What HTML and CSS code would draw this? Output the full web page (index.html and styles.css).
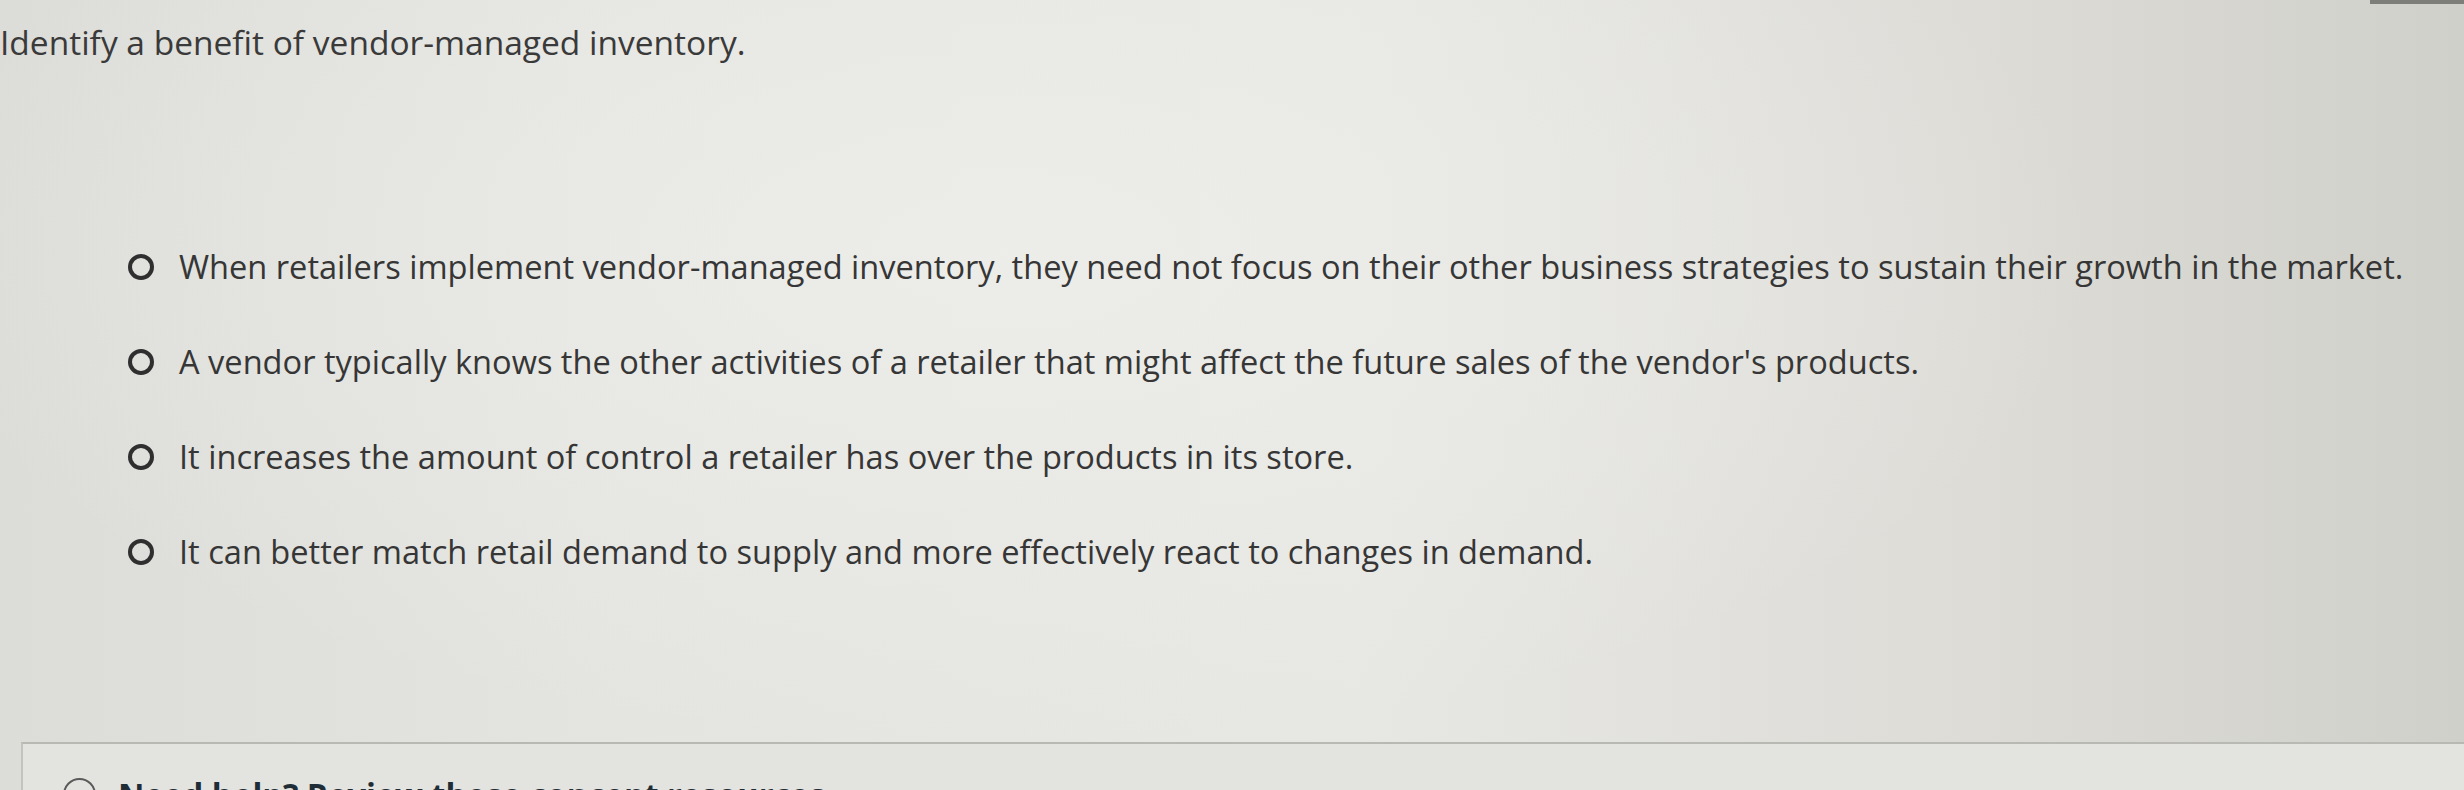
FILE: index.html
```html
<!DOCTYPE html>
<html lang="en">
<head>
<meta charset="utf-8">
<title>Vendor-managed inventory question</title>
<link rel="stylesheet" href="styles.css">
</head>
<body>
<main class="page">
  <div class="screen-edge"></div>
  <h1 class="prompt">Identify a benefit of vendor-managed inventory.</h1>
  <ul class="options">
    <li class="option"><span class="radio"></span><span class="label">When retailers implement vendor-managed inventory, they need not focus on their other business strategies to sustain their growth in the market.</span></li>
    <li class="option"><span class="radio"></span><span class="label">A vendor typically knows the other activities of a retailer that might affect the future sales of the vendor's products.</span></li>
    <li class="option"><span class="radio"></span><span class="label">It increases the amount of control a retailer has over the products in its store.</span></li>
    <li class="option"><span class="radio"></span><span class="label">It can better match retail demand to supply and more effectively react to changes in demand.</span></li>
  </ul>
  <section class="help">
    <span class="help-icon"></span>
    <span class="help-text">Need help? Review these concept resources.</span>
  </section>
</main>
</body>
</html>
```
FILE: styles.css
```css
html, body {
  margin: 0;
  padding: 0;
  height: 100%;
  overflow: hidden;
}
body {
  background:
    radial-gradient(ellipse 1100px 500px at 1000px 250px, rgba(238,238,235,0.8), rgba(238,238,235,0) 100%),
    linear-gradient(90deg, #dcdcd8 0%, #e4e4e0 25%, #e7e7e4 55%, #dddcd7 80%, #d0d0ca 100%);
  font-family: "Open Sans", "Liberation Sans", sans-serif;
  color: #3a3a3a;
}
.page {
  position: relative;
  height: 790px;
  overflow: hidden;
}
.screen-edge {
  position: absolute;
  top: 0;
  right: 0;
  width: 94px;
  height: 4px;
  background: #7d7d7a;
}
.prompt {
  margin: 21px 0 0 0;
  font-size: 33.5px;
  line-height: 42px;
  font-weight: 400;
  color: #3a3a3a;
}
.options {
  list-style: none;
  margin: 184px 0 0 0;
  padding: 0 0 0 128px;
  display: flex;
  flex-direction: column;
  gap: 55px;
}
.option {
  display: flex;
  align-items: center;
  gap: 25px;
  height: 40px;
  font-size: 32.6px;
  line-height: 40px;
  white-space: nowrap;
  color: #363636;
}
.radio {
  flex: none;
  width: 18px;
  height: 18px;
  border: 4px solid #2f2f2f;
  border-radius: 50%;
}
.help {
  margin: 170px 0 0 21px;
  border-top: 2px solid #b9b9b3;
  border-left: 2px solid #c4c4be;
  background: #e3e3df;
  height: 60px;
  display: flex;
  align-items: flex-start;
  gap: 22px;
  padding: 34px 0 0 40px;
}
.help-icon {
  flex: none;
  width: 29px;
  height: 29px;
  border: 2px solid #5a5a5a;
  border-radius: 50%;
}
.help-text {
  font-size: 32.5px;
  line-height: 38px;
  font-weight: 700;
  color: #1f2d36;
  margin-top: -2px;
}
```
